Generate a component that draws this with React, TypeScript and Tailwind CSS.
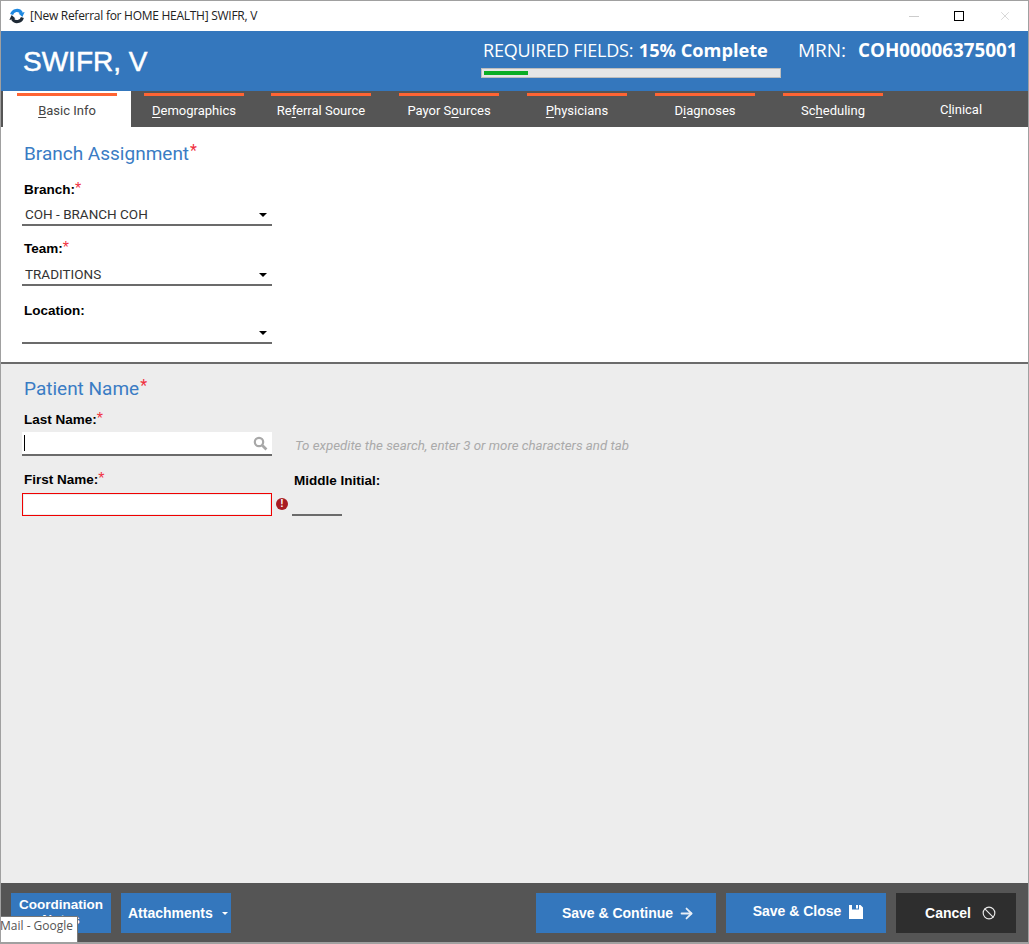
import React from 'react';
import { ArrowRight, Ban, X } from 'lucide-react';

const tabs = [
  { pre: '', key: 'B', post: 'asic Info', w: 'w-[128px]' },
  { pre: '', key: 'D', post: 'emographics', w: 'w-[126px]' },
  { pre: 'Re', key: 'f', post: 'erral Source', w: 'w-[128px]' },
  { pre: 'Payor S', key: 'o', post: 'urces', w: 'w-[128px]' },
  { pre: '', key: 'P', post: 'hysicians', w: 'w-[128px]' },
  { pre: 'D', key: 'i', post: 'agnoses', w: 'w-[128px]' },
  { pre: 'Sc', key: 'h', post: 'eduling', w: 'w-[128px]' },
];

function Req({ className = '' }: { className?: string }) {
  return <span className={`text-[#f03040] font-normal text-[16px] leading-none ${className}`}>*</span>;
}

function Label({ text, req }: { text: string; req?: boolean }) {
  return (
    <div className="h-[18px] flex items-start pl-[2px] text-[13.5px] leading-[18px] font-bold text-black font-['Liberation_Sans',sans-serif]">
      {text}
      {req && <Req />}
    </div>
  );
}

function Dropdown({ value }: { value: string }) {
  return (
    <div className="w-[250px] h-[24px] border-b-2 border-[#6b6b6b] flex items-center justify-between pl-[3px] pr-[5px] pt-[3px] text-[13.5px] text-[#333] font-['Roboto',sans-serif]">
      <span>{value}</span>
      <span className="w-0 h-0 border-x-[4px] border-x-transparent border-t-[4px] border-t-black" />
    </div>
  );
}

function AppIcon() {
  return (
    <svg width="16" height="16" viewBox="0 0 16 16" fill="none">
      <path d="M2.6 6.5 A5.5 5.5 0 0 1 12.6 5" stroke="#1e88e0" strokeWidth="3" />
      <path d="M15.6 4 L13.4 9 L9.6 5.6 Z" fill="#1e88e0" />
      <path d="M13.4 9.5 A5.5 5.5 0 0 1 3.4 11" stroke="#1f2a36" strokeWidth="3" />
      <path d="M0.4 12 L2.6 7 L6.4 10.4 Z" fill="#1f2a36" />
    </svg>
  );
}

function SearchGlyph() {
  return (
    <svg width="15" height="15" viewBox="0 0 15 15" fill="none" stroke="#a8a8a8">
      <circle cx="6" cy="6" r="4.2" strokeWidth="2.2" />
      <path d="M9.4 9.4 L13.4 13.4" strokeWidth="2.8" />
    </svg>
  );
}

function SaveGlyph() {
  return (
    <svg width="14" height="14" viewBox="0 0 14 14">
      <path fill="#ffffff" d="M0 0 H3 V4.5 H10 V0 H11.5 L14 2.5 V14 H0 Z" />
      <path fill="#ffffff" d="M7 0 H9 V3.5 H7 Z" />
    </svg>
  );
}

export default function App() {
  return (
    <div className="w-[1029px] h-[944px] flex flex-col border border-[#a0a0a0] border-b-[2px] bg-white font-['Roboto',sans-serif] overflow-hidden relative">
      {/* title bar */}
      <div className="h-[30px] shrink-0 flex items-center bg-white pl-[8px]">
        <AppIcon />
        <span className="ml-[5px] text-[12px] text-[#222] font-['Open_Sans',sans-serif] tracking-[-0.27px]">[New Referral for HOME HEALTH] SWIFR, V</span>
        <div className="ml-auto flex items-center mr-[16px]">
          <span className="w-[10px] h-px bg-[#ccc] mr-[35px]" />
          <span className="w-[10px] h-[10px] border border-black mr-[34px]" />
          <X className="w-[14px] h-[14px] text-[#bbb]" strokeWidth={1} />
        </div>
      </div>

      {/* patient header */}
      <div className="h-[60px] shrink-0 bg-[#3477bd] flex text-white">
        <div className="ml-[22px] mt-[14px] text-[28px] leading-[34px] [-webkit-text-stroke:0.5px_white] font-['Liberation_Sans',sans-serif]">SWIFR, V</div>
        <div className="ml-auto flex">
          <div className="w-[300px]">
            <div className="mt-[7px] h-[24px] pl-[2px] text-[18px] leading-[24px] whitespace-nowrap font-['Open_Sans',sans-serif] tracking-[-0.2px]">
              REQUIRED FIELDS: <span className="font-bold text-[18.2px] tracking-normal ml-[1px]">15% Complete</span>
            </div>
            <div className="mt-[6px] h-[10px] border border-[#bdbdbd] bg-[#e6e6e6] p-px pl-[2px]">
              <div className="h-[4px] mt-px w-[15%] bg-[#0aad25]" />
            </div>
          </div>
          <div className="w-[247px] pl-[17px] pt-[7px] text-[19px] leading-[24px] whitespace-nowrap font-['Open_Sans',sans-serif]">
            MRN: <span className="font-bold text-[18.8px] ml-[7px]">COH00006375001</span>
          </div>
        </div>
      </div>

      {/* tabs */}
      <div className="h-[36px] shrink-0 bg-[#555555] flex pl-[2px] text-[13px]">
        {tabs.map((t, i) => (
          <div key={t.post} className={`${t.w} ${i === 0 ? 'bg-white text-[#444]' : 'text-white'} flex flex-col items-center pt-[2px]`}>
            <span className="w-[100px] h-[3px] bg-[#ff6433]" />
            <span className="mt-[4px] leading-[22px]">
              {t.pre}
              <span className="underline underline-offset-2">{t.key}</span>
              {t.post}
            </span>
          </div>
        ))}
        <div className="w-[128px] text-white text-center pt-[8px] leading-[22px]">
          C<span className="underline underline-offset-2">l</span>inical
        </div>
      </div>

      {/* branch assignment */}
      <section className="h-[237px] shrink-0 bg-white pl-[21px] pt-[15px] border-b-2 border-[#6b6b6b]">
        <h2 className="h-[24px] pl-[2px] text-[19px] leading-[24px] text-[#3a7cc4] font-normal">
          Branch Assignment<Req className="align-[4px] ml-[1px]" />
        </h2>
        <div className="mt-[15px]"><Label text="Branch:" req /></div>
        <div className="mt-[3px]"><Dropdown value="COH - BRANCH COH" /></div>
        <div className="mt-[14px]"><Label text="Team:" req /></div>
        <div className="mt-[4px]"><Dropdown value="TRADITIONS" /></div>
        <div className="mt-[16px]"><Label text="Location:" /></div>
        <div className="mt-0"><Dropdown value="" /></div>
      </section>

      {/* patient name */}
      <section className="flex-1 min-h-0 bg-[#ededed] pl-[21px] pt-[13px]">
        <h2 className="h-[24px] pl-[2px] text-[19px] leading-[24px] text-[#3a7cc4] font-normal">
          Patient Name<Req className="align-[4px] ml-[1px]" />
        </h2>
        <div className="mt-[10px]"><Label text="Last Name:" req /></div>
        <div className="mt-[3px] flex items-center">
          <div className="w-[250px] h-[24px] bg-white border-b-2 border-[#6b6b6b] flex items-center justify-between pl-[2px] pr-[4px]">
            <span className="w-px h-[16px] bg-black" />
            <SearchGlyph />
          </div>
          <span className="ml-[23px] pt-[3px] text-[13.3px] italic text-[#aaa]">To expedite the search, enter 3 or more characters and tab</span>
        </div>
        <div className="mt-[15px] flex">
          <div>
            <Label text="First Name:" req />
            <div className="mt-[4px] w-[250px] h-[23px] bg-white border border-[#f00000] outline outline-1 -outline-offset-2 outline-[#eeeeee]" />
          </div>
          <div className="ml-[4px] mt-[27px] w-[12px] h-[12px] rounded-full bg-[#a81c22] text-white text-[10px] leading-[12px] font-bold text-center font-['Liberation_Sans',sans-serif]">!</div>
          <div className="ml-[4px] mt-[1px]">
            <Label text="Middle Initial:" />
            <div className="mt-[2px] w-[50px] h-[24px] border-b-2 border-[#6b6b6b]" />
          </div>
        </div>
      </section>

      {/* footer */}
      <div className="h-[59px] shrink-0 bg-[#555555] flex items-start pt-[10px] pl-[10px] pr-[12px] text-[14px] font-bold text-white font-['Liberation_Sans',sans-serif]">
        <div className="w-[100px] h-[40px] bg-[#3477bd] text-center text-[13.5px] leading-[15px] pt-[4px] overflow-hidden">Coordination Notes</div>
        <div className="ml-[10px] w-[110px] h-[40px] bg-[#3477bd] flex items-center pl-[7px]">
          Attachments
          <span className="ml-[9px] w-0 h-0 border-x-[3px] border-x-transparent border-t-[3px] border-t-white" />
        </div>
        <div className="ml-auto w-[180px] h-[40px] bg-[#3477bd] flex items-center justify-center gap-[5px] pl-[5px]">
          Save &amp; Continue <ArrowRight className="w-[17px] h-[17px] text-[#e8eef6]" strokeWidth={2.5} />
        </div>
        <div className="ml-[10px] w-[160px] h-[40px] bg-[#3477bd] flex items-center justify-center gap-[8px] pb-[3px] pl-[4px]">
          Save &amp; Close <SaveGlyph />
        </div>
        <div className="ml-[10px] w-[120px] h-[40px] bg-[#2e2e2e] flex items-center justify-center gap-[11px] pl-[9px]">
          Cancel <Ban className="w-[14px] h-[14px] text-[#e8e8e8]" strokeWidth={2} />
        </div>
      </div>

      {/* taskbar tooltip over the window */}
      <div className="absolute left-[-2px] top-[915px] w-[79px] h-[28px] bg-white border border-[#777] text-[12px] leading-[18px] text-[#555] font-['Open_Sans',sans-serif] whitespace-nowrap">
        Mail - Google
      </div>
    </div>
  );
}
